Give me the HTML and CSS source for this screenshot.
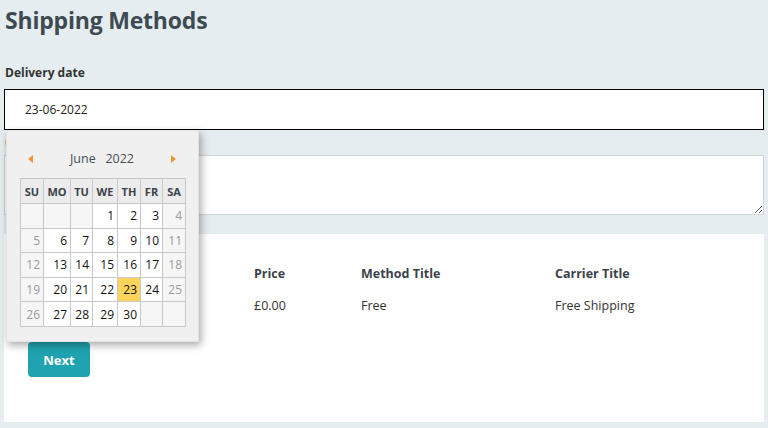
FILE: index.html
```html
<!DOCTYPE html>
<html lang="en">
<head>
    <meta charset="UTF-8">
    <meta name="viewport" content="width=device-width, initial-scale=1.0">
    <title>Shipping Methods</title>
    <link rel="stylesheet" href="styles.css">
</head>
<body>
    <div class="checkout">
        <h1 class="page-title">Shipping Methods</h1>

        <div class="field date-field">
            <label class="field-label">Delivery date</label>
            <div class="date-wrap">
                <input class="text-input focused" type="text" value="23-06-2022">

                <div class="datepicker">
                    <div class="dp-header">
                        <span class="dp-arrow prev"></span>
                        <span class="dp-title">June&nbsp;&nbsp;&nbsp;2022</span>
                        <span class="dp-arrow next"></span>
                    </div>
                    <table class="dp-table">
                        <colgroup>
                            <col style="width:23px"><col style="width:27px"><col style="width:22px"><col style="width:25px"><col style="width:23px"><col style="width:22px"><col style="width:23px">
                        </colgroup>
                        <thead>
                            <tr><th>SU</th><th>MO</th><th>TU</th><th>WE</th><th>TH</th><th>FR</th><th>SA</th></tr>
                        </thead>
                        <tbody>
                            <tr><td class="empty"></td><td class="empty"></td><td class="empty"></td><td>1</td><td>2</td><td>3</td><td class="off">4</td></tr>
                            <tr><td class="off">5</td><td>6</td><td>7</td><td>8</td><td>9</td><td>10</td><td class="off">11</td></tr>
                            <tr><td class="off">12</td><td>13</td><td>14</td><td>15</td><td>16</td><td>17</td><td class="off">18</td></tr>
                            <tr><td class="off">19</td><td>20</td><td>21</td><td>22</td><td class="today">23</td><td>24</td><td class="off">25</td></tr>
                            <tr><td class="off">26</td><td>27</td><td>28</td><td>29</td><td>30</td><td class="empty"></td><td class="empty"></td></tr>
                        </tbody>
                    </table>
                </div>
            </div>
        </div>

        <div class="field">
            <label class="field-label">Comment</label>
            <textarea class="text-area"></textarea>
        </div>

        <div class="methods-panel">
            <div class="methods-grid">
                <div class="cell head"></div>
                <div class="cell head">Price</div>
                <div class="cell head">Method Title</div>
                <div class="cell head">Carrier Title</div>

                <div class="cell"><input type="radio" checked></div>
                <div class="cell">£0.00</div>
                <div class="cell">Free</div>
                <div class="cell">Free Shipping</div>
            </div>
            <button class="btn-next">Next</button>
        </div>
    </div>
</body>
</html>
```

FILE: styles.css
```css
* {
    margin: 0;
    padding: 0;
    box-sizing: border-box;
}

body {
    background: #e6edf0;
    font-family: 'Open Sans', 'Noto Sans', sans-serif;
    color: #333;
    overflow: hidden;
}

.checkout {
    padding: 0 4px;
}

.page-title {
    font-size: 23px;
    font-weight: bold;
    color: #3d4a52;
    line-height: 30px;
    padding: 5px 1px 0;
    letter-spacing: -0.2px;
}

.field-label {
    display: block;
    font-size: 12px;
    font-weight: bold;
    color: #333;
    line-height: 16px;
    padding-left: 1px;
}

.date-field .field-label {
    margin-top: 30px;
    margin-bottom: 8px;
}

.date-wrap {
    position: relative;
}

.text-input {
    display: block;
    width: 100%;
    height: 41px;
    border: 1px solid #ccc;
    background: #fff;
    padding: 0 20px;
    font-family: inherit;
    font-size: 12px;
    color: #222;
    outline: none;
}

.text-input.focused {
    border-color: #000;
}

.field + .field .field-label {
    margin-top: 5px;
    margin-bottom: 4px;
}

.text-area {
    display: block;
    width: 100%;
    height: 60px;
    border: 1px solid #d0d4d6;
    background: #fff;
    resize: vertical;
    outline: none;
}

/* datepicker popup */
.datepicker {
    position: absolute;
    top: 100%;
    left: 2px;
    width: 193px;
    height: 212px;
    background: #f0f0f0;
    border: 1px solid #e2e2e2;
    box-shadow: 2px 3px 8px rgba(0, 0, 0, 0.35);
    padding: 0 13px;
    z-index: 10;
}

.dp-header {
    display: flex;
    align-items: center;
    justify-content: space-between;
    height: 47px;
    padding: 8px 9px 0 8px;
}

.dp-title {
    font-size: 12.5px;
    color: #4a4f55;
}

.dp-arrow {
    width: 0;
    height: 0;
    border-top: 4px solid transparent;
    border-bottom: 4px solid transparent;
}

.dp-arrow.prev {
    border-right: 5px solid #f0953a;
}

.dp-arrow.next {
    border-left: 5px solid #f0953a;
}

.dp-table {
    border-collapse: collapse;
    table-layout: fixed;
    width: 166px;
    font-size: 12px;
}

.dp-table th,
.dp-table td {
    border: 1px solid #c8c8c8;
}

.dp-table th {
    height: 25px;
    background: #ececec;
    font-size: 11px;
    font-weight: bold;
    color: #3b4249;
    text-align: center;
}

.dp-table td {
    height: 24.6px;
    background: #fff;
    color: #111;
    text-align: right;
    padding-right: 3px;
}

.dp-table td.off {
    background: #f6f6f6;
    color: #999;
}

.dp-table td.empty {
    background: #f6f6f6;
}

.dp-table td.today {
    background: #fcd45a;
}

/* shipping methods table */
.methods-panel {
    margin-top: 19px;
    background: #fff;
    height: 188px;
    padding: 31px 24px 0;
}

.methods-grid {
    display: grid;
    grid-template-columns: 226px 107px 194px 1fr;
    row-gap: 14px;
    font-size: 12.5px;
    color: #333;
}

.cell {
    line-height: 18px;
}

.cell.head {
    font-weight: bold;
    color: #3b4249;
}

.btn-next {
    margin-top: 27px;
    width: 62px;
    height: 35px;
    border: none;
    border-radius: 4px;
    background: #1fa3b0;
    color: #fff;
    font-family: inherit;
    font-size: 13px;
    font-weight: bold;
    cursor: pointer;
}
```
